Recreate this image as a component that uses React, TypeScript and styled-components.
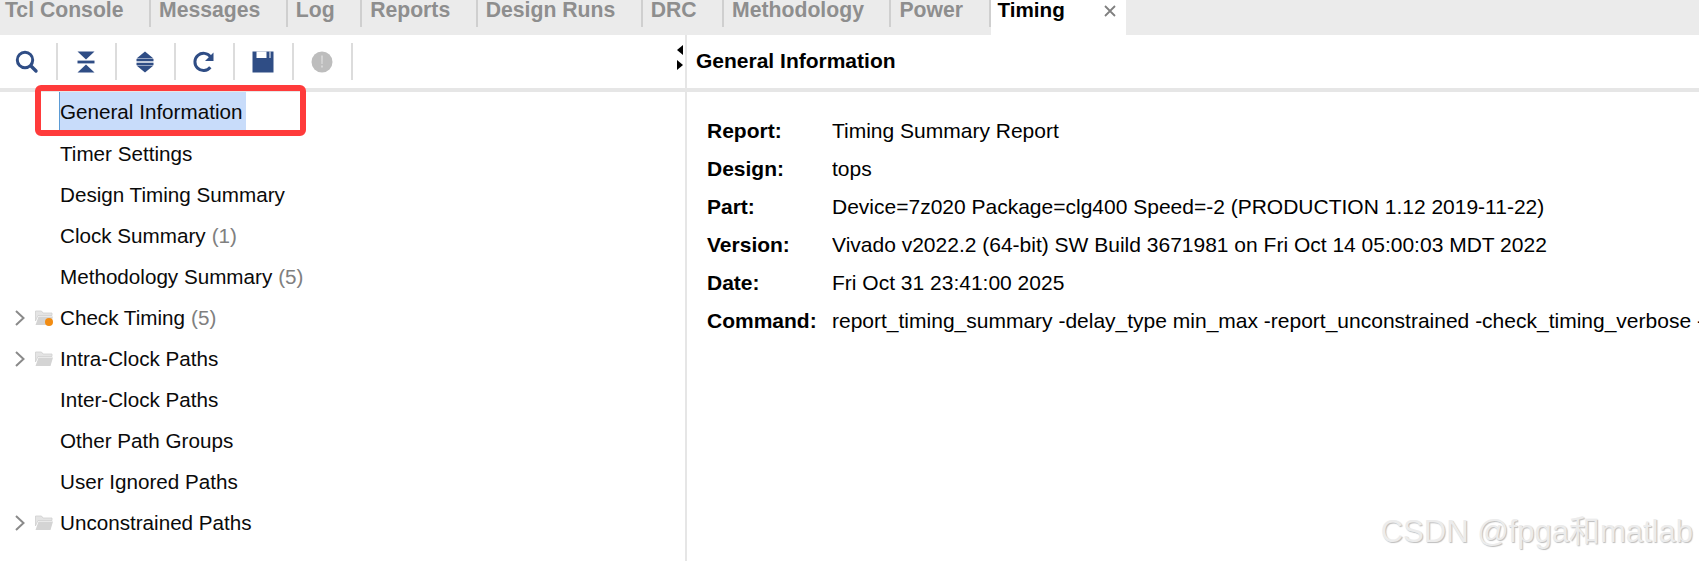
import React from "react";
import styled, { createGlobalStyle } from "styled-components";

const Global = createGlobalStyle`
  html, body { margin: 0; padding: 0; background: #fff; overflow: hidden; }
  body { font-family: "Liberation Sans", Arial, sans-serif; color: #000; }
`;

const Page = styled.div`
  position: relative;
  height: 561px;
  display: flex;
  flex-direction: column;
  overflow: hidden;
  font-size: 20.65px;
`;

const TabBar = styled.div`
  display: flex;
  height: 35px;
  flex: none;
  background: #ebebeb;
`;

const Tab = styled.div<{ $first?: boolean }>`
  height: 27px;
  padding: 0 25.5px 0 ${(p) => (p.$first ? "5px" : "8px")};
  border-right: 2px solid #cfcfcf;
  font-size: 21.2px;
  font-weight: 700;
  line-height: 19px;
  color: #8e8e8e;
  white-space: nowrap;
`;

const ActiveTab = styled.div`
  width: 135px;
  height: 35px;
  box-sizing: border-box;
  padding-left: 7px;
  display: flex;
  justify-content: space-between;
  background: #fff;
  font-weight: 700;
  line-height: 19px;
`;

const CloseMark = styled.svg`
  width: 12px;
  height: 12px;
  margin: 5px 10px 0 0;
  stroke: #808080;
  stroke-width: 1.8;
  fill: none;
`;

const Panes = styled.div`
  flex: 1;
  display: flex;
  min-height: 0;
`;

const LeftPane = styled.div`
  width: 685px;
  flex: none;
  border-right: 2px solid #e6e6e6;
  display: flex;
  flex-direction: column;
`;

const RightPane = styled.div`
  flex: 1;
  min-width: 0;
  overflow: hidden;
  font-size: 21px;
`;

const Toolbar = styled.div`
  height: 53px;
  border-bottom: 4px solid #e6e6e6;
  display: flex;
  align-items: center;
`;

const ToolButton = styled.div`
  width: 59px;
  height: 37px;
  box-sizing: border-box;
  border-right: 2px solid #dcdcdc;
  padding-right: 1px;
  display: flex;
  align-items: center;
  justify-content: center;
  &:first-child { margin-left: -1px; }
`;

const SplitArrows = styled.div`
  margin: 0 2px 8px auto;
  display: flex;
  flex-direction: column;
  gap: 5px;
`;

const Arrow = styled.svg`
  display: block;
  width: 6px;
  height: 10px;
  fill: #000;
`;

const Tree = styled.div`
  display: flex;
  flex-direction: column;
`;

const Row = styled.div`
  height: 41px;
  flex: none;
  display: flex;
  align-items: center;
  line-height: 41px;
  white-space: nowrap;
  color: #0a0a0a;
`;

const Lead = styled.div`
  width: 60px;
  flex: none;
  box-sizing: border-box;
  padding-left: 15px;
  display: flex;
  align-items: center;
  gap: 10px;
`;

const Selected = styled.span`
  margin-left: -1px;
  padding-right: 4px;
  height: 41px;
  line-height: 39px;
  box-sizing: border-box;
  background: #c8dcfa;
  border-left: 1px solid #5b9bd5;
`;

const Count = styled.span`
  color: #808080;
  margin-left: 6px;
`;

const Heading = styled.div`
  height: 51px;
  padding: 0 0 2px 9px;
  border-bottom: 4px solid #e6e6e6;
  display: flex;
  align-items: center;
  font-weight: 700;
  white-space: nowrap;
`;

const Details = styled.div`
  padding: 20px 0 0 20px;
  display: grid;
  grid-template-columns: 125px 1fr;
  grid-auto-rows: 38px;
  align-items: center;
  white-space: nowrap;
`;

const Key = styled.div`
  font-weight: 700;
`;

const Value = styled.div`
  overflow: hidden;
`;

const Callout = styled.div`
  position: absolute;
  left: 35px;
  top: 85px;
  width: 271px;
  height: 51px;
  box-sizing: border-box;
  border: 6.5px solid #ff3b3b;
  border-radius: 6px;
  pointer-events: none;
`;

const Watermark = styled.div`
  position: absolute;
  right: 6px;
  top: 514px;
  font-family: "Liberation Sans", "Noto Sans CJK SC", sans-serif;
  font-size: 31px;
  line-height: 36px;
  color: #ececec;
  text-shadow: 1px 1px 1px #bdbdbd;
  white-space: nowrap;
`;

const Blue = "#2f4d85";

const IconBox = styled.svg`
  display: block;
  width: 24px;
  height: 24px;
`;

const SearchIcon = () => (
  <IconBox viewBox="0 0 24 24" fill="none">
    <circle cx="10" cy="10" r="7.7" stroke={Blue} strokeWidth="3" />
    <path d="M16 16l5 5" stroke={Blue} strokeWidth="3.4" strokeLinecap="round" />
  </IconBox>
);

const CollapseIcon = () => (
  <IconBox viewBox="0 0 24 24" fill={Blue}>
    <path d="M3.5 1.5h17L12 9.5zM3.5 22.500h17L12 14.500z" />
    <rect x="3.5" y="10.600" width="17" height="2.800" />
  </IconBox>
);

const ExpandIcon = () => (
  <IconBox viewBox="0 0 24 24" fill={Blue}>
    <path d="M12 1.500L20.500 8.500H3.500zM12 22.500L20.500 15.500H3.500z" />
    <rect x="3.500" y="9" width="17" height="2.300" />
    <rect x="3.500" y="12.700" width="17" height="2.300" />
  </IconBox>
);

const RefreshIcon = () => (
  <IconBox viewBox="0 0 24 24" fill="none">
    <path d="M18.300 17.200A8.600 8.600 0 1 1 18.600 7" stroke={Blue} strokeWidth="3" />
    <path d="M21.500 2.500V11H13z" fill={Blue} />
  </IconBox>
);

const SaveIcon = () => (
  <IconBox viewBox="0 0 24 24">
    <path d="M1.500 1.500H22.500V22.500H1.500z" fill={Blue} />
    <path d="M5.500 1.500H15.500V8H5.500zM18.500 1.500H19.500V8H18.500z" fill="#fff" />
  </IconBox>
);

const AlertIcon = () => (
  <IconBox viewBox="0 0 24 24">
    <circle cx="12" cy="12" r="10.500" fill="#bdbdbd" />
    <path d="M11 5.500h2l-.3 8.500h-1.400zM11 15.500h2v2h-2z" fill="#d6d6d6" />
  </IconBox>
);

const ChevronIcon = styled.svg`
  display: block;
  width: 10px;
  height: 16px;
  fill: none;
  stroke: #8a8a8a;
  stroke-width: 2;
  flex: none;
`;

const FolderIcon = styled.svg`
  display: block;
  width: 18px;
  height: 16px;
  flex: none;
  margin-top: 1px;
`;

const Chevron = () => (
  <ChevronIcon viewBox="0 0 10 16">
    <path d="M1 1l7.500 7L1 15" />
  </ChevronIcon>
);

const Folder = ({ warn }: { warn?: boolean }) => (
  <FolderIcon viewBox="0 0 18 16">
    <path d="M.5 1h6l1.500 2h9v2.500H3L.5 11z" fill="#e4e4e4" stroke="#cfcfcf" strokeWidth=".8" />
    <path d="M3.500 6.500H18L15.500 15H.5z" fill="#d4d4d4" />
    {warn && <circle cx="14" cy="12" r="4" fill="#f28c12" />}
  </FolderIcon>
);

const tabs = ["Messages", "Log", "Reports", "Design Runs", "DRC", "Methodology", "Power"];

const tree: { label: string; count?: number; folder?: boolean; warn?: boolean }[] = [
  { label: "Timer Settings" },
  { label: "Design Timing Summary" },
  { label: "Clock Summary", count: 1 },
  { label: "Methodology Summary", count: 5 },
  { label: "Check Timing", count: 5, folder: true, warn: true },
  { label: "Intra-Clock Paths", folder: true },
  { label: "Inter-Clock Paths" },
  { label: "Other Path Groups" },
  { label: "User Ignored Paths" },
  { label: "Unconstrained Paths", folder: true },
];

const details: [string, string][] = [
  ["Report:", "Timing Summary Report"],
  ["Design:", "tops"],
  ["Part:", "Device=7z020 Package=clg400 Speed=-2 (PRODUCTION 1.12 2019-11-22)"],
  ["Version:", "Vivado v2022.2 (64-bit) SW Build 3671981 on Fri Oct 14 05:00:03 MDT 2022"],
  ["Date:", "Fri Oct 31 23:41:00 2025"],
  ["Command:", "report_timing_summary -delay_type min_max -report_unconstrained -check_timing_verbose -"],
];

export default function App() {
  return (
    <Page>
      <Global />
      <TabBar>
        <Tab $first>Tcl Console</Tab>
        {tabs.map((t) => (
          <Tab key={t}>{t}</Tab>
        ))}
        <ActiveTab>
          Timing
          <CloseMark viewBox="0 0 12 12">
            <path d="M1 1l10 10M11 1L1 11" />
          </CloseMark>
        </ActiveTab>
      </TabBar>
      <Panes>
        <LeftPane>
          <Toolbar>
            <ToolButton><SearchIcon /></ToolButton>
            <ToolButton><CollapseIcon /></ToolButton>
            <ToolButton><ExpandIcon /></ToolButton>
            <ToolButton><RefreshIcon /></ToolButton>
            <ToolButton><SaveIcon /></ToolButton>
            <ToolButton><AlertIcon /></ToolButton>
            <SplitArrows>
              <Arrow viewBox="0 0 6 10"><path d="M6 0v10L0 5z" /></Arrow>
              <Arrow viewBox="0 0 6 10"><path d="M0 0v10l6-5z" /></Arrow>
            </SplitArrows>
          </Toolbar>
          <Tree>
            <Row>
              <Lead />
              <Selected>General Information</Selected>
            </Row>
            {tree.map((n) => (
              <Row key={n.label}>
                <Lead>
                  {n.folder && <Chevron />}
                  {n.folder && <Folder warn={n.warn} />}
                </Lead>
                {n.label}
                {n.count !== undefined && <Count>({n.count})</Count>}
              </Row>
            ))}
          </Tree>
        </LeftPane>
        <RightPane>
          <Heading>General Information</Heading>
          <Details>
            {details.map(([k, v]) => (
              <React.Fragment key={k}>
                <Key>{k}</Key>
                <Value>{v}</Value>
              </React.Fragment>
            ))}
          </Details>
        </RightPane>
      </Panes>
      <Callout />
      <Watermark>CSDN @fpga和matlab</Watermark>
    </Page>
  );
}
